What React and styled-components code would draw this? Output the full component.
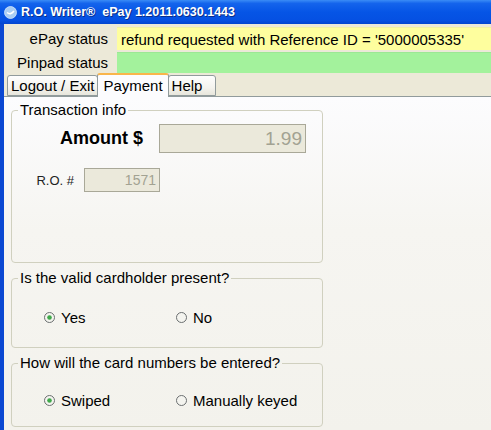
import React from "react";
import styled, { createGlobalStyle } from "styled-components";

const Global = createGlobalStyle`
  html, body { margin: 0; padding: 0; }
  body {
    width: 491px; height: 430px; overflow: hidden;
    background: #ece9d8;
    font-family: "Liberation Sans", Arial, sans-serif;
  }
`;

const Window = styled.div`
  width: 491px;
  height: 430px;
  display: flex;
  flex-direction: column;
  overflow: hidden;
`;

const TitleBar = styled.div`
  height: 24px;
  flex: none;
  display: flex;
  align-items: center;
  gap: 4px;
  padding-left: 4px;
  background: linear-gradient(#3a8cf6 0%, #1464ec 14%, #0655e6 50%, #0550e2 85%, #0345cf 100%);
  color: #fff;
  font-weight: bold;
  font-size: 12.5px;
  white-space: pre;
  text-shadow: 1px 1px 0 #0a2f8a;
`;

const Body = styled.div`
  flex: 1;
  display: flex;
  flex-direction: column;
  border-left: 4px solid #0b48d2;
  background: #ece9d8;
  min-height: 0;
`;

const StatusGrid = styled.div`
  display: grid;
  grid-template-columns: 113px 1fr;
  row-gap: 2px;
  padding-top: 3px;
`;

const StatusLabel = styled.div`
  font-size: 15px;
  color: #000;
  text-align: right;
  padding-right: 9px;
  display: flex;
  align-items: center;
  justify-content: flex-end;
`;

const StatusValue = styled.div`
  height: ${p => p.$h}px;
  background: ${p => p.$bg};
  font-size: 15px;
  color: #000;
  padding-left: 4px;
  display: flex;
  align-items: center;
  border-top: 1px solid ${p => p.$edge};
`;

const TabStrip = styled.div`
  display: flex;
  align-items: flex-end;
  height: 23px;
  padding-left: 3px;
  position: relative;
  z-index: 1;
`;

const Tab = styled.div`
  height: ${p => (p.$active ? 24 : 21)}px;
  min-width: ${p => p.$minW || 0}px;
  box-sizing: border-box;
  padding: 0 ${p => (p.$active ? 5 : 3)}px;
  font-size: 15px;
  display: flex;
  align-items: center;
  color: #000;
  border: 1px solid #919b9c;
  border-bottom: ${p => (p.$active ? "none" : "1px solid #919b9c")};
  border-radius: 3px 3px 0 0;
  background: ${p => (p.$active ? "#fcfcfe" : "linear-gradient(#fefefe, #f4f3ee 60%, #e8e6dc)")};
  border-top: ${p => (p.$active ? "2px solid #f9b54b" : "1px solid #919b9c")};
  margin-left: ${p => (p.$first ? 0 : -1)}px;
  margin-bottom: ${p => (p.$active ? -1 : 0)}px;
  padding-bottom: ${p => (p.$active ? 2 : 0)}px;
`;

const Panel = styled.div`
  flex: 1;
  border-top: 1px solid #919b9c;
  background: linear-gradient(#fcfcfe 0%, #f6f5f1 40%, #f3f2ec 100%);
  padding: 5px 0 0 7px;
  display: flex;
  flex-direction: column;
  gap: 7px;
`;

const Group = styled.fieldset`
  width: 312px;
  box-sizing: border-box;
  margin: 0;
  border: 1px solid #d0d0bf;
  border-radius: 4px;
  padding: ${p => p.$pt}px 0 ${p => p.$pb}px 0;
`;

const Legend = styled.legend`
  font-size: 15px;
  line-height: 16px;
  color: #000;
  padding: 0 2px;
  margin-left: 6px;
`;

const AmountRow = styled.div`
  display: flex;
  align-items: center;
`;

const AmountLabel = styled.div`
  width: 131px;
  text-align: right;
  font-weight: bold;
  font-size: 18px;
  color: #000;
`;

const ReadOnlyBox = styled.div`
  width: ${p => p.$w}px;
  height: ${p => p.$h}px;
  box-sizing: border-box;
  margin-left: ${p => p.$ml}px;
  background: #ebe9db;
  border: 1px solid #a9a898;
  color: #a2a292;
  font-size: ${p => p.$fs}px;
  display: flex;
  align-items: center;
  justify-content: flex-end;
  padding-right: 3px;
`;

const RoRow = styled.div`
  display: flex;
  align-items: center;
  margin-top: 15px;
`;

const RoLabel = styled.div`
  width: 62px;
  text-align: right;
  font-size: 13px;
  color: #222;
`;

const RadioRow = styled.div`
  display: flex;
  padding-left: 32px;
`;

const RadioItem = styled.div`
  width: ${p => p.$w}px;
  display: flex;
  align-items: center;
  gap: 6px;
  font-size: 15px;
  color: #000;
  height: 16px;
`;

const Radio = ({ checked }) => (
  <svg width="11" height="11" viewBox="0 0 11 11">
    <circle cx="5.5" cy="5.5" r="5" fill="#f4f4ef" stroke="#6b6f70" strokeWidth="1" />
    {checked && <circle cx="5.5" cy="5.5" r="2.3" fill="#3fa84a" />}
  </svg>
);

const AppIcon = () => (
  <svg width="13" height="13" viewBox="0 0 13 13">
    <circle cx="6.5" cy="6.5" r="6" fill="#a9cdf4" stroke="#d7e8fb" strokeWidth="0.8" />
    <path d="M3 6.5 Q6.5 9.5 10 5" stroke="#ffffff" strokeWidth="1.6" fill="none" />
  </svg>
);

export default function App() {
  return (
    <>
      <Global />
      <Window>
        <TitleBar>
          <AppIcon />
          <span>{"R.O. Writer®  ePay 1.2011.0630.1443"}</span>
        </TitleBar>
        <Body>
          <StatusGrid>
            <StatusLabel>ePay status</StatusLabel>
            <StatusValue $bg="#fefe9e" $edge="#f2f2a0" $h={22}>
              refund requested with Reference ID = '5000005335'
            </StatusValue>
            <StatusLabel>Pinpad status</StatusLabel>
            <StatusValue $bg="#a3f29c" $edge="#9be894" $h={20} />
          </StatusGrid>
          <TabStrip>
            <Tab $first>Logout / Exit</Tab>
            <Tab $active>Payment</Tab>
            <Tab $minW={48}>Help</Tab>
          </TabStrip>
          <Panel>
            <Group $pt={6} $pb={70}>
              <Legend>Transaction info</Legend>
              <AmountRow>
                <AmountLabel>Amount $</AmountLabel>
                <ReadOnlyBox $w={147} $h={29} $ml={16} $fs={19}>1.99</ReadOnlyBox>
              </AmountRow>
              <RoRow>
                <RoLabel>R.O. #</RoLabel>
                <ReadOnlyBox $w={76} $h={24} $ml={10} $fs={14}>1571</ReadOnlyBox>
              </RoRow>
            </Group>
            <Group $pt={23} $pb={22}>
              <Legend>Is the valid cardholder present?</Legend>
              <RadioRow>
                <RadioItem $w={132}><Radio checked />Yes</RadioItem>
                <RadioItem $w={120}><Radio />No</RadioItem>
              </RadioRow>
            </Group>
            <Group $pt={21} $pb={18}>
              <Legend>How will the card numbers be entered?</Legend>
              <RadioRow>
                <RadioItem $w={132}><Radio checked />Swiped</RadioItem>
                <RadioItem $w={140}><Radio />Manually keyed</RadioItem>
              </RadioRow>
            </Group>
          </Panel>
        </Body>
      </Window>
    </>
  );
}
